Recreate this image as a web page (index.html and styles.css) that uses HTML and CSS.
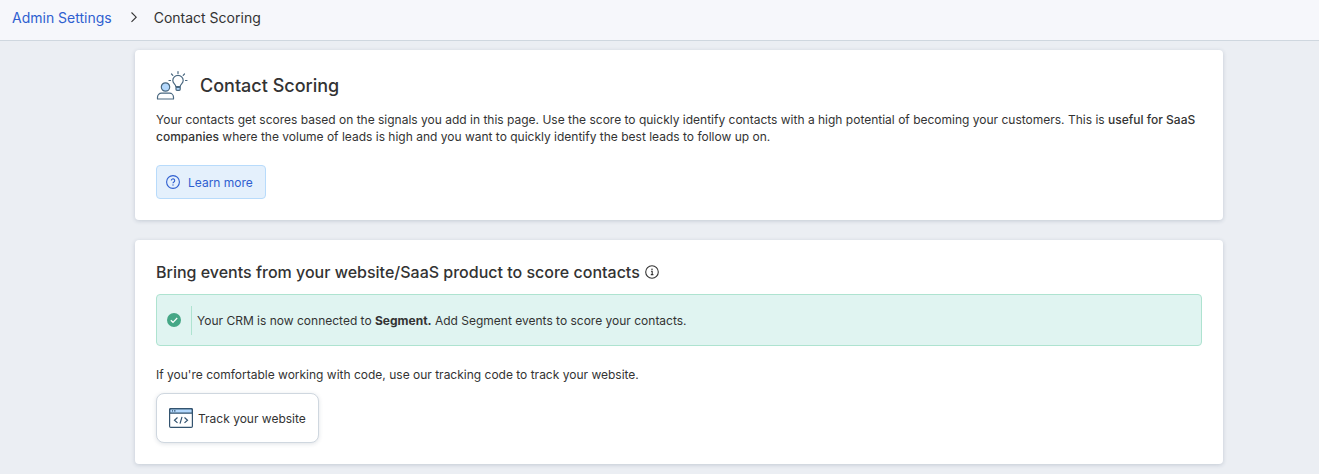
FILE: index.html
```html
<!DOCTYPE html>
<html lang="en">
<head>
  <meta charset="UTF-8" />
  <title>Contact Scoring</title>
  <meta name="viewport" content="width=device-width, initial-scale=1" />
  <link rel="stylesheet" href="styles.css">
</head>
<body>
  <nav class="breadcrumb" aria-label="Breadcrumb">
    <a href="#">Admin Settings</a>
    <svg width="8" height="12" viewBox="0 0 8 12" fill="none" stroke="#333" stroke-width="1.1"><path d="M1.500 1.500 6.200 6.200l-4.700 4.700" /></svg>
    <span class="current">Contact Scoring</span>
  </nav>

  <main class="page">
    <section class="card intro">
      <header class="title-row">
        <svg width="32" height="32" viewBox="0 0 32 32" fill="none" stroke="#4a6880" stroke-width="1.2" stroke-linecap="round">
          <circle cx="9.500" cy="17" r="4.200" fill="#b3d8fd" />
          <path d="M1.500 29v-1.800a4 4 0 0 1 4-4h8a4 4 0 0 1 4 4V29z" stroke-linejoin="round" />
          <path d="M19.800 16.500c0-2-3-2.900-3-6a5.200 5.200 0 0 1 10.400 0c0 3.100-3 4-3 6z" />
          <path d="M20 17.300h4.200v2a1 1 0 0 1-1 1h-2.200a1 1 0 0 1-1-1z" fill="#b3d8fd" />
          <path d="M22 1.500v2M15.500 4l1.300 1.300M28.500 4l-1.300 1.300M13 10.500h1.500M29.500 10.500H31" />
        </svg>
        <h1>Contact Scoring</h1>
      </header>
      <p>Your contacts get scores based on the signals you add in this page. Use the score to quickly identify contacts with a high potential of becoming your customers. This is <b class="medium">useful for SaaS companies</b> where the volume of leads is high and you want to quickly identify the best leads to follow up on.</p>
      <button class="learn-more" type="button">
        <svg width="14" height="14" viewBox="0 0 14 14" fill="none" stroke="#2f5fd0" stroke-width="1.1">
          <circle cx="7" cy="7" r="6.400" />
          <path d="M5.300 5.600a1.700 1.700 0 1 1 2.600 1.400c-.6.4-.9.700-.9 1.300" />
          <circle cx="7" cy="10" r=".7" fill="#2f5fd0" stroke="none" />
        </svg>
        Learn more
      </button>
    </section>

    <section class="card events">
      <h2>
        Bring events from your website/SaaS product to score contacts
        <svg width="14" height="14" viewBox="0 0 14 14" fill="none" stroke="#333" stroke-width="1.1">
          <circle cx="7" cy="7" r="6.300" />
          <path d="M6 6.300h1.200v3M5.800 9.600h2.600" />
          <circle cx="7" cy="4.300" r=".8" fill="#333" stroke="none" />
        </svg>
      </h2>
      <div class="notice" role="status">
        <svg width="14" height="14" viewBox="0 0 14 14" fill="none">
          <circle cx="7" cy="7" r="7" fill="#45a786" />
          <path d="M3.800 7.200l2.200 2.100 4.200-4.300" stroke="#fff" stroke-width="1.200" />
        </svg>
        <p>Your CRM is now connected to <b>Segment.</b> Add Segment events to score your contacts.</p>
      </div>
      <p>If you're comfortable working with code, use our tracking code to track your website.</p>
      <button class="track" type="button">
        <svg width="24" height="20" viewBox="0 0 24 20" fill="none" stroke="#33536f" stroke-width="1.200">
          <path d="M.6 5.200V1.800A1.200 1.200 0 0 1 1.800.6h20.400a1.200 1.200 0 0 1 1.200 1.200v3.400z" fill="#b3d8fd" />
          <rect x=".6" y=".6" width="22.800" height="18.800" rx="1.200" />
          <path d="M3 2.900h1M5 2.900h1.500" />
          <path d="M8.500 9.500l-3 2.700 3 2.700M15.500 9.500l3 2.700-3 2.700M13 8.800l-2 6.800" />
        </svg>
        Track your website
      </button>
    </section>
  </main>
</body>
</html>
```
FILE: styles.css
```css
:root {
  --page-bg: #ebeef3;
  --text: #333333;
  --link: #2f5fd0;
  --line: #cfd7df;
}
* { box-sizing: border-box; }
body {
  margin: 0;
  font-family: Inter, "Liberation Sans", sans-serif;
  font-size: 12px;
  line-height: 17px;
  color: var(--text);
  background: var(--page-bg);
}
h1, h2, p { margin: 0; }
svg { flex: none; }
button {
  font: inherit;
  color: inherit;
  display: flex;
  align-items: center;
  cursor: pointer;
}
.breadcrumb {
  display: flex;
  align-items: center;
  gap: 16px;
  height: 41px;
  padding: 0 12px 6px;
  font-size: 14px;
  background: #f6f7fb;
  border-bottom: 1px solid var(--line);
}
.breadcrumb a {
  color: var(--link);
  text-decoration: none;
}
.breadcrumb svg { margin-left: 2px; }
.page {
  display: flex;
  flex-direction: column;
  gap: 20px;
  padding: 9px 96px 10px 135px;
}
.card {
  padding: 20px 21px 21px;
  background: #fff;
  border-radius: 4px;
  box-shadow: 0 1px 4px rgba(40, 60, 90, 0.2);
}
.title-row {
  display: flex;
  align-items: center;
  gap: 12px;
  margin-bottom: 9px;
}
h1 {
  font-size: 18px;
  font-weight: 500;
  line-height: 24px;
}
.medium { font-weight: 500; }
.learn-more {
  gap: 8px;
  height: 34px;
  margin-top: 20px;
  padding: 0 12px 0 9px;
  color: var(--link);
  background: #e4f0fc;
  border: 1px solid #b8dbfb;
  border-radius: 4px;
}
h2 {
  display: flex;
  align-items: center;
  gap: 5px;
  font-size: 16px;
  font-weight: 500;
  line-height: 24px;
}
.notice {
  display: flex;
  align-items: center;
  gap: 10px;
  min-height: 52px;
  margin: 10px 0 20px;
  padding: 10px;
  background: #e0f4f1;
  border: 1px solid #aee3d0;
  border-radius: 4px;
}
.notice p {
  padding: 6px 5px;
  border-left: 1px solid #aee3d0;
}
.notice b { font-weight: 700; }
.track {
  gap: 5px;
  height: 50px;
  margin-top: 10px;
  padding: 0 12px;
  background: #fff;
  border: 1px solid var(--line);
  border-radius: 8px;
  box-shadow: 0 1px 4px rgba(40, 60, 90, 0.15);
}
```
